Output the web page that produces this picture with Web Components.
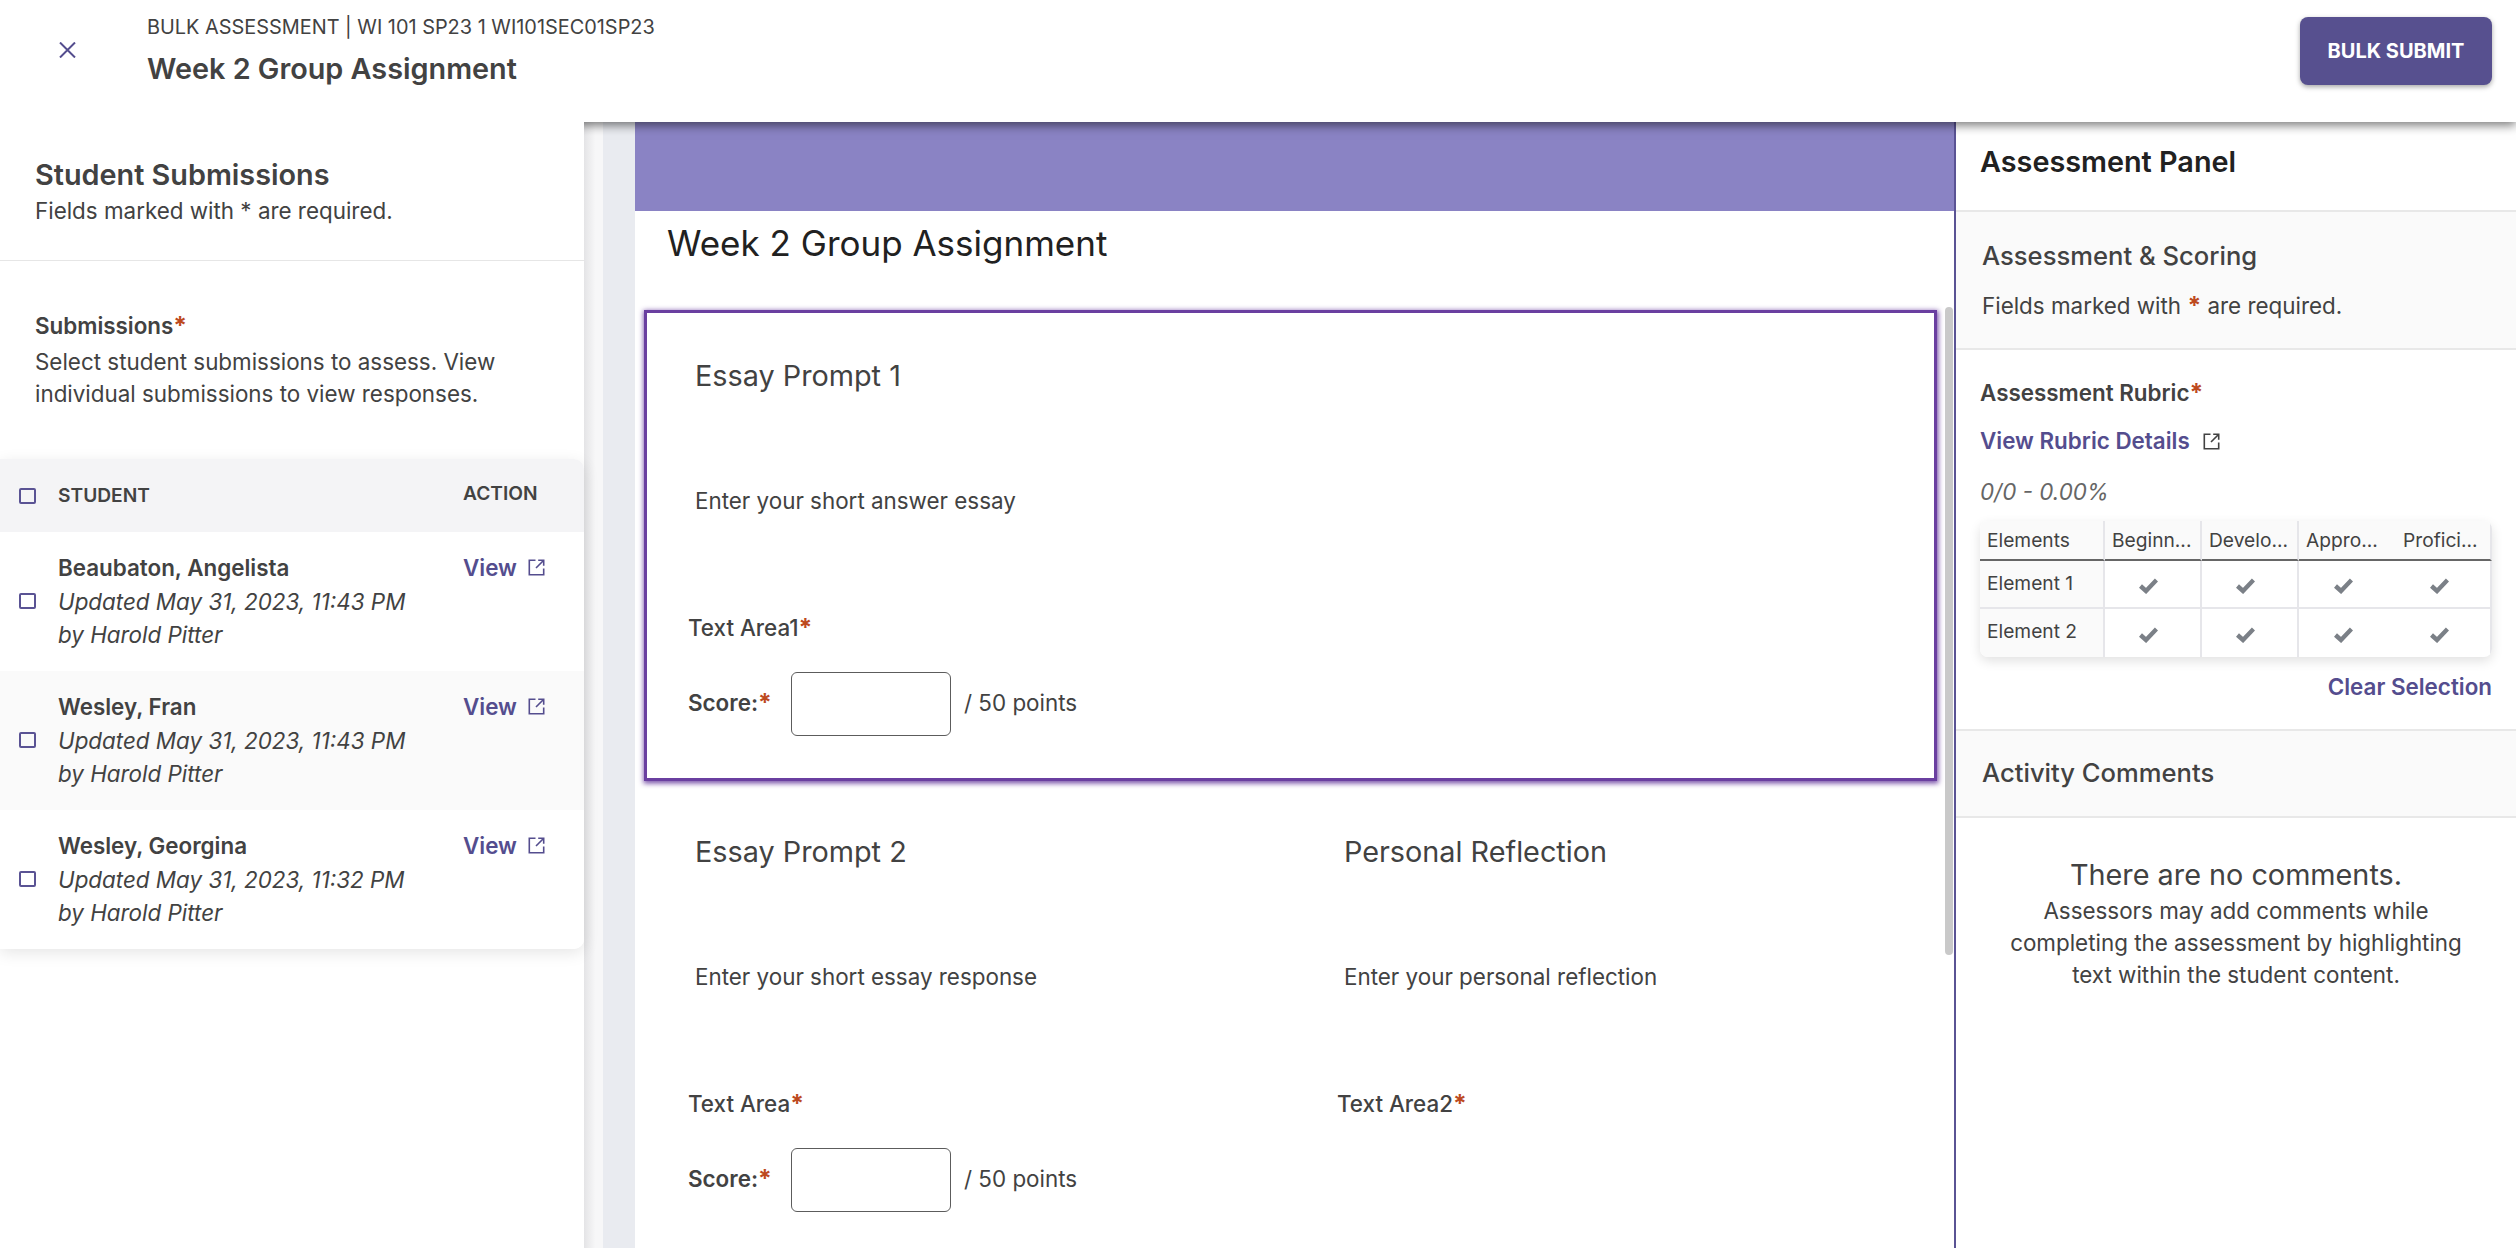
<!DOCTYPE html>
<html lang="en">
<head>
<meta charset="utf-8">
<title>Bulk Assessment</title>
<style>
  html, body { margin: 0; height: 100%; overflow: hidden; background: #fff; }
  body { font-family: Inter, "Liberation Sans", sans-serif; color: #424242; }
</style>
</head>
<body>
<bulk-app></bulk-app>
<script>
// shared icon markup
const EXT_ICON = (color) => `<svg width="17" height="17" viewBox="0 0 17 17" fill="none" stroke="${color}" stroke-width="1.6" style="display:block"><path d="M7.5 1.3H1.3V15.7H15.7V9.5M8 9L15.5 1.5M10.2 1.3H15.7V6.8"/></svg>`;
const CHECK_ICON = `<svg width="19" height="16" viewBox="0 0 19 16" fill="none" stroke="#7b8087" stroke-width="4.4" style="display:block"><path d="M1.5 8L7 13L17.5 2"/></svg>`;

class ReqMark extends HTMLElement {
  connectedCallback() {
    this.attachShadow({ mode: 'open' });
    this.shadowRoot.innerHTML = `<style>:host{display:inline;color:#bd4a1e;font-weight:700;font-size:1.1em;line-height:0}</style>*`;
  }
}

class TickBox extends HTMLElement {
  connectedCallback() {
    this.attachShadow({ mode: 'open' });
    this.shadowRoot.innerHTML = `<style>
      :host{display:block;width:17px;height:16px;box-sizing:border-box;border:2px solid #5a5394;border-radius:2px}
    </style>`;
  }
}

class AppHeader extends HTMLElement {
  connectedCallback() {
    this.attachShadow({ mode: 'open' });
    this.shadowRoot.innerHTML = `<style>
      :host{display:flex;height:122px;box-sizing:border-box;background:#fff;position:relative;z-index:1;box-shadow:0 3px 10px rgba(0,0,0,.55)}
      .close{margin:42px 0 0 59px;width:88px}
      .titles{flex:1;padding-top:14px}
      .eyebrow{font-size:19.9px;line-height:26px;color:#424242}
      h1{margin:11px 0 0;font-size:28.8px;line-height:36px;font-weight:600;color:#424242}
      button{margin:17px 24px 0 0;width:192px;height:68px;border:0;border-radius:8px;background:#57508f;color:#fff;font:700 20px Inter,sans-serif;box-shadow:0 2px 5px rgba(0,0,0,.35)}
    </style>
    <div class="close"><svg width="17" height="16" viewBox="0 0 17 16" fill="none" stroke="#544d8e" stroke-width="2" style="display:block"><path d="M1 .5L16 15.5M16 .5L1 15.5"/></svg></div>
    <div class="titles">
      <div class="eyebrow">BULK ASSESSMENT | WI 101 SP23 1 WI101SEC01SP23</div>
      <h1>Week 2 Group Assignment</h1>
    </div>
    <button>BULK SUBMIT</button>`;
  }
}

class SubmissionRow extends HTMLElement {
  connectedCallback() {
    this.attachShadow({ mode: 'open' });
    const name = this.getAttribute('name');
    const when = this.getAttribute('when');
    this.shadowRoot.innerHTML = `<style>
      :host{display:grid;grid-template-columns:58px 405px 1fr;height:139px;box-sizing:border-box;padding-top:19px;background:#fff}
      :host([alt]){background:#fafafa}
      tick-box{margin:42px 0 0 19px}
      .who{font-size:22.4px;line-height:33.6px;font-style:italic;color:#424242}
      .who b{display:block;font-style:normal;font-weight:600}
      .who span{display:block}
      a{display:flex;align-items:center;gap:11px;height:33.6px;color:#544d8e;font-size:22.4px;font-weight:600}
    </style>
    <tick-box></tick-box>
    <div class="who"><b>${name}</b><span>Updated ${when}</span><span>by Harold Pitter</span></div>
    <a>View ${EXT_ICON('#544d8e')}</a>`;
  }
}

class SubmissionsPanel extends HTMLElement {
  connectedCallback() {
    this.attachShadow({ mode: 'open' });
    this.shadowRoot.innerHTML = `<style>
      :host{display:block;width:584px;flex:none;background:#fff;position:relative;z-index:2}
      .top{padding:35px 35px 33px;border-bottom:1px solid #e6e6e6}
      h2{margin:0 0 2px;font-size:28.8px;line-height:36px;font-weight:600;color:#424242}
      p{margin:0;font-size:22.4px;line-height:32px;color:#424242}
      .intro{padding:49px 35px 49px}
      .intro b{display:block;font-size:22.4px;line-height:32px;font-weight:600;margin-bottom:4px}
      .table{border-radius:0 10px 10px 0;box-shadow:0 4px 16px rgba(0,0,0,.1);overflow:hidden}
      .head{display:grid;grid-template-columns:58px 405px 1fr;height:73px;align-items:center;background:#f4f4f6;font-size:19.2px;font-weight:600}
      .head tick-box{margin-left:19px}
      .head .stu{margin-top:-2px}
      .head .act{margin-top:-5px}
    </style>
    <div class="top">
      <h2>Student Submissions</h2>
      <p>Fields marked with * are required.</p>
    </div>
    <div class="intro">
      <b>Submissions<req-mark></req-mark></b>
      <p>Select student submissions to assess. View individual submissions to view responses.</p>
    </div>
    <div class="table">
      <div class="head"><tick-box></tick-box><span class="stu">STUDENT</span><span class="act">ACTION</span></div>
      <slot></slot>
    </div>`;
  }
}

class EssayQuestion extends HTMLElement {
  connectedCallback() {
    this.attachShadow({ mode: 'open' });
    const noScore = this.hasAttribute('no-score');
    this.shadowRoot.innerHTML = `<style>
      :host{display:block;box-sizing:border-box;height:465px;padding:46px 41px 0}
      h3{margin:0 0 92px 7px;font-size:28.8px;line-height:34px;font-weight:400;color:#424242}
      .prompt{margin:0 0 95px 7px;font-size:22.4px;line-height:32px;color:#424242}
      .label{font-size:22.4px;line-height:32px;font-weight:500;color:#424242}
      .score{display:flex;align-items:center;margin-top:28px;height:64px;font-size:22.4px;color:#424242}
      .score b{font-weight:600;width:103px;margin-top:-3px}
      .box{box-sizing:border-box;width:160px;height:64px;border:1.5px solid #5c5c5c;border-radius:6px;margin-right:13px}
      .pts{margin-top:-3px}
    </style>
    <h3>${this.getAttribute('heading')}</h3>
    <p class="prompt">${this.getAttribute('prompt')}</p>
    <div class="label">${this.getAttribute('label')}<req-mark></req-mark></div>
    ${noScore ? '' : `<div class="score"><b>Score:<req-mark></req-mark></b><span class="box"></span><span class="pts">/ 50 points</span></div>`}`;
  }
}

class ContentPane extends HTMLElement {
  connectedCallback() {
    this.attachShadow({ mode: 'open' });
    this.shadowRoot.innerHTML = `<style>
      :host{display:flex;flex:1;min-width:0;overflow:hidden}
      .gutter{width:19px;flex:none;background:linear-gradient(90deg,#e4e4e6,#f7f7f8 60%)}
      .margin{width:32px;flex:none;background:#e9ebf0}
      .sheet{flex:1;min-width:0;background:#fff;position:relative}
      .banner{height:89px;background:#8a83c4}
      h2{margin:0;padding:10px 0 45px 32px;font-size:35px;line-height:44px;font-weight:400;color:#212121}
      .stack{padding:0 17px 0 9px}
      .active{border:3px solid #6a3fa0;box-shadow:0 1px 5px 1.5px rgba(106,63,160,.9);height:471px;box-sizing:border-box;margin-bottom:8px}
      .pair{display:grid;grid-template-columns:649px 1fr;margin-left:3px}
      .bar{position:absolute;left:1310px;top:185px;width:8px;height:648px;border-radius:4px;background:#c9c9c9}
    </style>
    <div class="gutter"></div>
    <div class="margin"></div>
    <div class="sheet">
      <div class="banner"></div>
      <h2>Week 2 Group Assignment</h2>
      <div class="stack">
        <div class="active"><essay-question heading="Essay Prompt 1" prompt="Enter your short answer essay" label="Text Area1"></essay-question></div>
        <div class="pair">
          <essay-question heading="Essay Prompt 2" prompt="Enter your short essay response" label="Text Area"></essay-question>
          <essay-question no-score heading="Personal Reflection" prompt="Enter your personal reflection" label="Text Area2"></essay-question>
        </div>
      </div>
      <div class="bar"></div>
    </div>`;
  }
}

class RubricTable extends HTMLElement {
  connectedCallback() {
    this.attachShadow({ mode: 'open' });
    const cols = ['Beginn...', 'Develo...', 'Appro...', 'Profici...'];
    const row = (name) => `<div class="c name">${name}</div>` + cols.map(() => `<div class="c tick">${CHECK_ICON}</div>`).join('');
    this.shadowRoot.innerHTML = `<style>
      :host{display:grid;grid-template-columns:125px 97px 97px 97px 1fr;grid-template-rows:40px 48px 48px;border-radius:8px;overflow:hidden;box-shadow:0 4px 12px rgba(0,0,0,.12);font-size:19.2px;color:#424242}
      .c{box-sizing:border-box;border-right:2px solid #e6e6ea;border-bottom:2px solid #e6e6ea;padding-left:7px;white-space:nowrap;overflow:hidden}
      .c:nth-child(5n){border-right:0}
      .h{background:#fafafa;border-bottom:2px solid #666;line-height:38px}
      .name{background:#fafafa;line-height:44px}
      .tick{display:flex;align-items:center;justify-content:center;padding:4px 8px 0 0}
      .c:nth-last-child(-n+5){border-bottom:0}
    </style>
    <div class="c h">Elements</div>${cols.map(c => `<div class="c h">${c}</div>`).join('')}
    ${row('Element 1')}${row('Element 2')}`;
  }
}

class AssessmentPanel extends HTMLElement {
  connectedCallback() {
    this.attachShadow({ mode: 'open' });
    this.shadowRoot.innerHTML = `<style>
      :host{display:block;width:562px;flex:none;box-sizing:border-box;border-left:2px solid #5a5394;background:#fff}
      .title{padding:22px 24px 30px;border-bottom:2px solid #e8e8e8;font-size:28.8px;line-height:36px;font-weight:600;color:#212121}
      .band{background:#fafafa;border-bottom:2px solid #e8e8e8;padding:27px 25px 26px 26px}
      h3{margin:0;font-size:25.6px;line-height:34px;font-weight:500;color:#424242}
      .band p{margin:17px 0 0;font-size:22.4px;line-height:32px}
      .rubric{padding:27px 24px 26px 24px}
      .lbl{font-size:22.4px;line-height:32px;font-weight:600}
      .link{display:flex;align-items:center;gap:13px;margin-top:16px;font-size:22.4px;line-height:32px;font-weight:600;color:#544d8e}
      .pct{margin:19px 0 13px;font-size:22.4px;line-height:32px;font-style:italic;color:#666}
      .clear{margin-top:14px;text-align:right;font-size:22.4px;line-height:32px;font-weight:600;color:#544d8e}
      .comments{border-top:2px solid #e8e8e8;padding:25px 25px 26px 26px}
      .empty{padding:39px 40px 0;text-align:center;font-size:22.4px;line-height:32px}
      .empty div{font-size:28.8px;line-height:36px;margin-bottom:2px}
    </style>
    <div class="title">Assessment Panel</div>
    <div class="band">
      <h3>Assessment &amp; Scoring</h3>
      <p>Fields marked with <req-mark></req-mark> are required.</p>
    </div>
    <div class="rubric">
      <div class="lbl">Assessment Rubric<req-mark></req-mark></div>
      <div class="link">View Rubric Details ${EXT_ICON('#424242')}</div>
      <div class="pct">0/0 - 0.00%</div>
      <rubric-table></rubric-table>
      <div class="clear">Clear Selection</div>
    </div>
    <div class="band comments"><h3>Activity Comments</h3></div>
    <div class="empty">
      <div>There are no comments.</div>
      Assessors may add comments while completing the assessment by highlighting text within the student content.
    </div>`;
  }
}

class BulkApp extends HTMLElement {
  connectedCallback() {
    this.attachShadow({ mode: 'open' });
    this.shadowRoot.innerHTML = `<style>
      :host{display:flex;flex-direction:column;height:1248px;overflow:hidden}
      .body{display:flex;flex:1;min-height:0}
    </style>
    <app-header></app-header>
    <div class="body">
      <submissions-panel>
        <submission-row name="Beaubaton, Angelista" when="May 31, 2023, 11:43 PM"></submission-row>
        <submission-row alt name="Wesley, Fran" when="May 31, 2023, 11:43 PM"></submission-row>
        <submission-row name="Wesley, Georgina" when="May 31, 2023, 11:32 PM"></submission-row>
      </submissions-panel>
      <content-pane></content-pane>
      <assessment-panel></assessment-panel>
    </div>`;
  }
}

customElements.define('req-mark', ReqMark);
customElements.define('tick-box', TickBox);
customElements.define('app-header', AppHeader);
customElements.define('submission-row', SubmissionRow);
customElements.define('submissions-panel', SubmissionsPanel);
customElements.define('essay-question', EssayQuestion);
customElements.define('content-pane', ContentPane);
customElements.define('rubric-table', RubricTable);
customElements.define('assessment-panel', AssessmentPanel);
customElements.define('bulk-app', BulkApp);
</script>
</body>
</html>
